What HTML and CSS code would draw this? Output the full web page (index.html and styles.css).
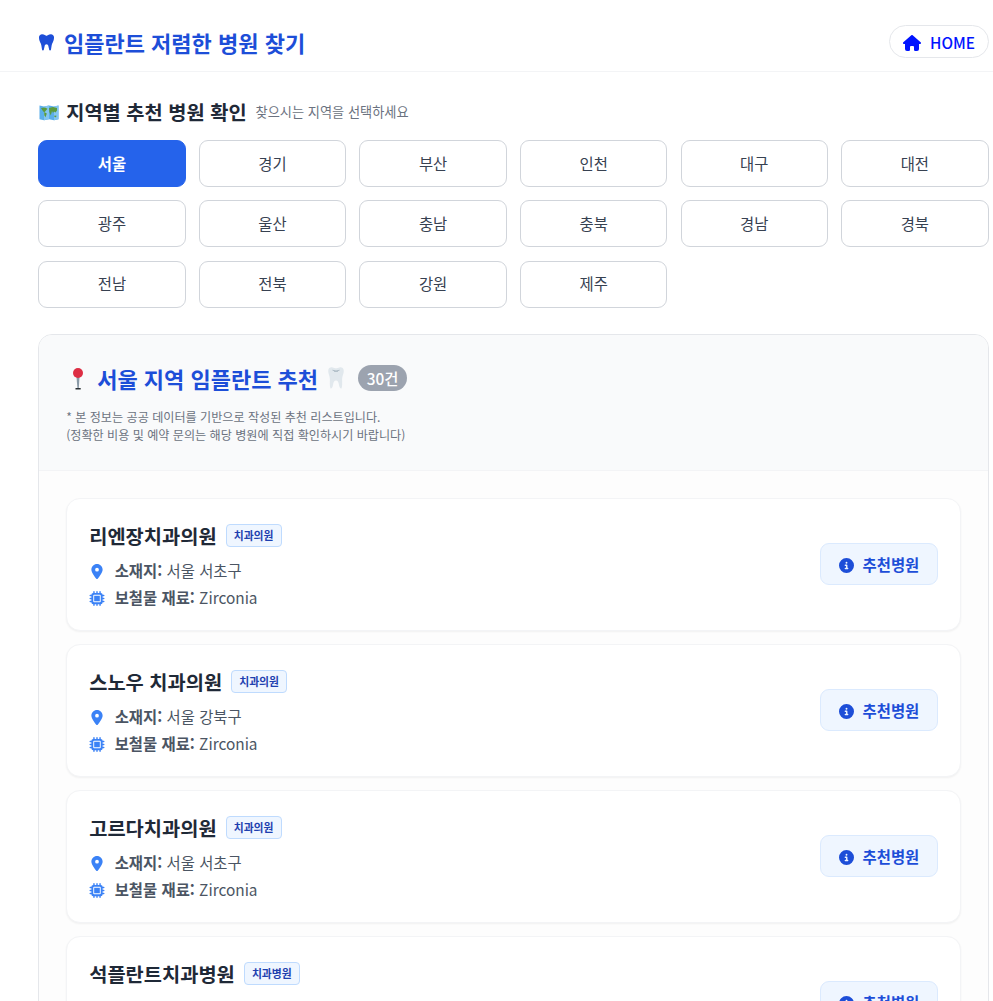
FILE: index.html
```html
<!DOCTYPE html>
<html lang="ko">
<head>
<meta charset="utf-8">
<title>임플란트 저렴한 병원 찾기</title>
<link rel="stylesheet" href="styles.css">
</head>
<body>
<svg class="defs" aria-hidden="true">
  <symbol id="pin" viewBox="0 0 384 512"><path d="M215.7 499.2C267 435 384 279.4 384 192 384 86 298 0 192 0S0 86 0 192c0 87.400 117 243 168.300 307.200a30 30 0 0 0 47.400 0zM192 128a64 64 0 1 1 0 128 64 64 0 1 1 0-128z"/></symbol>
  <symbol id="chip" viewBox="0 0 512 512"><path d="M176 24a24 24 0 0 0-48 0v40a64 64 0 0 0-64 64H24a24 24 0 0 0 0 48h40v56H24a24 24 0 0 0 0 48h40v56H24a24 24 0 0 0 0 48h40a64 64 0 0 0 64 64v40a24 24 0 0 0 48 0v-40h56v40a24 24 0 0 0 48 0v-40h56v40a24 24 0 0 0 48 0v-40a64 64 0 0 0 64-64h40a24 24 0 0 0 0-48h-40v-56h40a24 24 0 0 0 0-48h-40v-56h40a24 24 0 0 0 0-48h-40a64 64 0 0 0-64-64V24a24 24 0 0 0-48 0v40h-56V24a24 24 0 0 0-48 0v40h-56zM160 128h192a32 32 0 0 1 32 32v192a32 32 0 0 1-32 32H160a32 32 0 0 1-32-32V160a32 32 0 0 1 32-32zm192 32H160v192h192z" fill-rule="evenodd"/></symbol>
  <symbol id="info" viewBox="0 0 512 512"><path fill-rule="evenodd" d="M256 512a256 256 0 1 0 0-512 256 256 0 1 0 0 512zM216 336h24v-64h-24a24 24 0 0 1 0-48h48a24 24 0 0 1 24 24v88h8a24 24 0 0 1 0 48h-80a24 24 0 0 1 0-48zm40-208a32 32 0 1 1 0 64 32 32 0 1 1 0-64z"/></symbol>
</svg>
<header class="site-header">
  <h1 class="brand">
    <svg class="brand-icon" viewBox="0 0 448 512"><path d="M187 52l30 19c4 3 9 3 14 0l30-19C290 33 323 23 357 23c50 0 91 41 91 91v26c0 43-12 84-34 121-18 29-29 61-35 95l-22 133a27 27 0 0 1-53 0l-25-115c-6-30-23-54-55-54s-49 24-55 54l-25 115a27 27 0 0 1-53 0L69 356c-6-34-17-66-35-95C12 224 0 183 0 140v-26C0 64 41 23 91 23c34 0 67 10 96 29z"/></svg>
    <span>임플란트 저렴한 병원 찾기</span>
  </h1>
  <a class="home">
    <svg class="home-icon" viewBox="0 0 576 512"><path d="M575.800 255.500c0 18-15 32-32 32h-32l.7 160.200a64 64 0 0 1-64 64H392a40 40 0 0 1-40-40v-88a32 32 0 0 0-32-32h-64a32 32 0 0 0-32 32v88a40 40 0 0 1-40 40h-56a64 64 0 0 1-64-64V287.600H32c-18 0-32-14-32-32 0-9 3-17 10-24L266.400 8c7-7 15-8 22-8s15 2 21 7l255 224c8 7 12 15 11.400 24.500z"/></svg>
    <span>HOME</span>
  </a>
</header>
<main class="page">
  <div class="region-head">
    <svg class="map-icon" viewBox="0 0 20 17">
      <path d="M.5 1.500 5 2.500 10 1.500l5 1 4.500-1v13.700l-4.500 1-5-1-5 1-4.500-1z" fill="#5baee9"/>
      <path d="M5 2.500 10 1.500v13.700l-5 1zM15 2.500l4.500-1v13.700l-4.500 1z" fill="#83c5f1"/>
      <path d="M2 4l4-.5 2.500 1.200-1.700 2-1.300 1.500-1-.5-1.500-2zM5.200 8l2.600 1.400-1.300 3.800-1.200-2zM10 4l4-1 4 1v2.500l-1.500 2-1.500-1-1 1.500-1-2-1.200 4.500-1.500-3.500zM15.500 11.500l2 .2-.5 1.500-1.700-.3z" fill="#5c9b3c"/>
    </svg>
    <h2 class="region-title">지역별 추천 병원 확인</h2>
    <span class="region-sub">찾으시는 지역을 선택하세요</span>
  </div>
  <nav class="regions">
    <button class="region active">서울</button><button class="region">경기</button><button class="region">부산</button><button class="region">인천</button><button class="region">대구</button><button class="region">대전</button>
    <button class="region">광주</button><button class="region">울산</button><button class="region">충남</button><button class="region">충북</button><button class="region">경남</button><button class="region">경북</button>
    <button class="region">전남</button><button class="region">전북</button><button class="region">강원</button><button class="region">제주</button>
  </nav>
  <section class="panel">
    <div class="panel-head">
      <div class="panel-row">
        <svg class="pushpin" viewBox="0 0 10 22"><path d="M3.500 9h3L5.800 20H4.400z" fill="#8999a6"/><path d="M2.500 20h5.200v1.600H2.500z" fill="#292f33"/><circle cx="5" cy="5" r="5" fill="#dd2e44"/></svg>
        <h2 class="panel-title">서울 지역 임플란트 추천</h2>
        <svg class="tooth" viewBox="0 0 16 22"><path d="M.2 4C.2 1 2.500 0 4.500.4 6 .8 7 1.200 8 1.200S10 .8 11.500.4C13.500 0 15.800 1 15.800 4c0 3-1.700 5-1.700 8.500 0 3 .4 6.500-.6 9-1.500.3-2.300-2-2.600-4-.3-2-1-4-2.900-4s-2.600 2-2.900 4c-.3 2-1.100 4.300-2.600 4-1-2.500-.6-6-.6-9C1.900 9 .2 7 .2 4z" fill="#e1e8ed"/><path d="M4.500 3.200Q8 5 11.500 3.200M6 4.300h4" fill="none" stroke="#a9b8c2" stroke-width=".9"/></svg>
        <span class="count">30건</span>
      </div>
      <p class="note">* 본 정보는 공공 데이터를 기반으로 작성된 추천 리스트입니다.<br>(정확한 비용 및 예약 문의는 해당 병원에 직접 확인하시기 바랍니다)</p>
    </div>
    <div class="list">
      <article class="card">
        <div class="details">
          <div class="name-row"><h3 class="name">리엔장치과의원</h3><span class="tag">치과의원</span></div>
          <p class="info"><svg class="info-icon"><use href="#pin"/></svg><span><b>소재지:</b> 서울 서초구</span></p>
          <p class="info"><svg class="info-icon"><use href="#chip"/></svg><span><b>보철물 재료:</b> Zirconia</span></p>
        </div>
        <a class="pick"><svg class="pick-icon"><use href="#info"/></svg><span>추천병원</span></a>
      </article>
      <article class="card">
        <div class="details">
          <div class="name-row"><h3 class="name">스노우 치과의원</h3><span class="tag">치과의원</span></div>
          <p class="info"><svg class="info-icon"><use href="#pin"/></svg><span><b>소재지:</b> 서울 강북구</span></p>
          <p class="info"><svg class="info-icon"><use href="#chip"/></svg><span><b>보철물 재료:</b> Zirconia</span></p>
        </div>
        <a class="pick"><svg class="pick-icon"><use href="#info"/></svg><span>추천병원</span></a>
      </article>
      <article class="card">
        <div class="details">
          <div class="name-row"><h3 class="name">고르다치과의원</h3><span class="tag">치과의원</span></div>
          <p class="info"><svg class="info-icon"><use href="#pin"/></svg><span><b>소재지:</b> 서울 서초구</span></p>
          <p class="info"><svg class="info-icon"><use href="#chip"/></svg><span><b>보철물 재료:</b> Zirconia</span></p>
        </div>
        <a class="pick"><svg class="pick-icon"><use href="#info"/></svg><span>추천병원</span></a>
      </article>
      <article class="card">
        <div class="details">
          <div class="name-row"><h3 class="name">석플란트치과병원</h3><span class="tag">치과병원</span></div>
        </div>
        <a class="pick"><svg class="pick-icon"><use href="#info"/></svg><span>추천병원</span></a>
      </article>
    </div>
  </section>
</main>
</body>
</html>
```

FILE: styles.css
```css
* { box-sizing: border-box; }
html { height: 100%; overflow: hidden; }
body {
  margin: 0;
  height: 1001px;
  overflow: hidden;
  background: #fff;
  color: #1f2937;
  font-family: "Noto Sans CJK KR", "Noto Sans", sans-serif;
  white-space: nowrap;
}
h1, h2, h3, p { margin: 0; }
svg { flex: none; fill: currentColor; }
.defs { display: none; }

.site-header {
  display: flex;
  align-items: center;
  justify-content: space-between;
  height: 72px;
  padding: 12px 4px 0 38px;
  border-bottom: 1px solid #f3f4f6;
}
.brand {
  display: flex;
  align-items: center;
  gap: 10px;
  color: #1d4ed8;
  font-size: 22px;
  line-height: 32px;
  font-weight: 700;
}
.brand-icon { width: 15px; height: 18px; margin-left: 1px; }
.home {
  display: flex;
  align-items: center;
  gap: 9px;
  width: 100px;
  height: 33px;
  padding-left: 13px;
  border: 1px solid #e5e7eb;
  border-radius: 17px;
  color: #0014ff;
  font-size: 15.4px;
  font-weight: 500;
}
.home-icon { width: 18px; height: 16px; margin-top: 3px; }

.page { padding: 25px 4.450px 0 38.200px; }
.region-head { display: flex; align-items: center; height: 30px; }
.map-icon { width: 20px; height: 17px; margin: 1px 7px 0 1px; }
.region-title { font-size: 19.800px; line-height: 30px; font-weight: 700; }
.region-sub { margin-left: 9px; margin-bottom: 1px; color: #6b7280; font-size: 13.200px; }

.regions {
  display: grid;
  grid-template-columns: repeat(6, 1fr);
  grid-auto-rows: 47px;
  gap: 13.400px 13.200px;
  margin-top: 13px;
}
.region {
  padding: 0 0 2px;
  border: 1px solid #d1d5db;
  border-radius: 9px;
  background: #fff;
  color: #374151;
  font: 400 15.400px "Noto Sans CJK KR", sans-serif;
}
.region.active { border-color: #2563eb; background: #2563eb; color: #fff; font-weight: 700; }

.panel {
  margin-top: 26.200px;
  border: 1px solid #e5e7eb;
  border-radius: 14px;
  background: #fdfdfd;
  overflow: hidden;
}
.panel-head {
  height: 136px;
  padding: 27px 27px 0;
  border-bottom: 1px solid #f3f4f6;
  background: #f9fafb;
}
.panel-row { display: flex; align-items: center; height: 32px; }
.pushpin { width: 10px; height: 22px; margin: 2px 14px 0 7px; }
.panel-title { color: #1d4ed8; font-size: 22px; line-height: 32px; font-weight: 700; }
.tooth { width: 16px; height: 22px; margin: 1px 0 0 10px; }
.count {
  width: 49px;
  height: 26px;
  margin-left: 14px;
  border-radius: 13px;
  background: #9ca3af;
  color: #fff;
  font-size: 15.400px;
  line-height: 26px;
  font-weight: 500;
  text-align: center;
}
.note { margin-top: 14px; color: #6b7280; font-size: 12.100px; line-height: 18px; }

.list { display: grid; gap: 13px; padding: 27px; }
.card {
  display: flex;
  align-items: center;
  justify-content: space-between;
  height: 133px;
  padding: 0 22px;
  border: 1px solid #f3f4f6;
  border-radius: 14px;
  background: #fff;
  box-shadow: 0 1px 2px rgba(0, 0, 0, .05);
}
.details { align-self: flex-start; padding-top: 21px; }
.name-row { display: flex; align-items: center; gap: 9px; height: 32px; margin-bottom: 5px; }
.name { font-size: 19.800px; line-height: 30px; font-weight: 700; }
.tag {
  width: 56px;
  height: 23px;
  border: 1px solid #bfdbfe;
  border-radius: 4px;
  background: #eff6ff;
  color: #1e40af;
  font-size: 10.800px;
  line-height: 21px;
  font-weight: 700;
  text-align: center;
}
.info { display: flex; align-items: center; gap: 9.500px; color: #4b5563; font-size: 15.400px; line-height: 27px; }
.info-icon { width: 16px; height: 15px; margin-top: 2px; color: #3b82f6; }
.pick {
  display: flex;
  align-items: center;
  gap: 9px;
  width: 118px;
  height: 42px;
  margin-bottom: 1px;
  padding-left: 18px;
  border: 1px solid #dbeafe;
  border-radius: 9px;
  background: #eff6ff;
  color: #1d4ed8;
  font-size: 15.400px;
  font-weight: 700;
}
.pick-icon { width: 15px; height: 15px; margin-top: 3px; }
```
